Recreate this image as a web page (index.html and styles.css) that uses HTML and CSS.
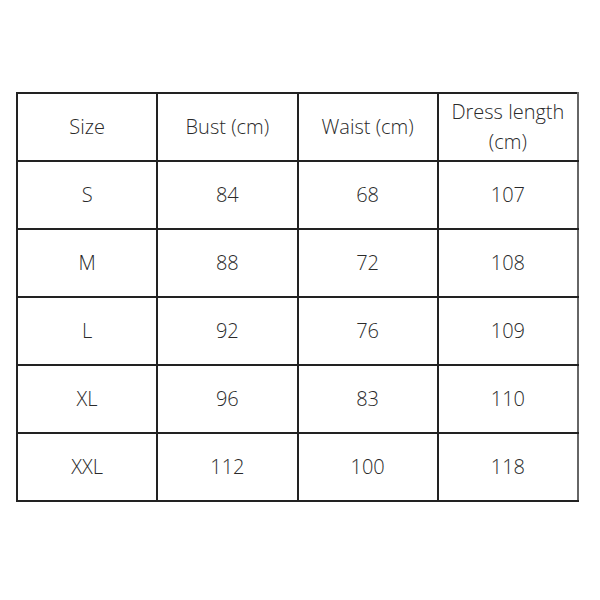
FILE: index.html
```html
<!DOCTYPE html>
<html>
<head>
<meta charset="utf-8">
<link rel="stylesheet" href="styles.css">
</head>
<body>
<div class="page">
<table class="size-table">
<tr><td>Size</td><td>Bust (cm)</td><td>Waist (cm)</td><td class="two">Dress length<br>(cm)</td></tr>
<tr><td>S</td><td>84</td><td>68</td><td>107</td></tr>
<tr><td>M</td><td>88</td><td>72</td><td>108</td></tr>
<tr><td>L</td><td>92</td><td>76</td><td>109</td></tr>
<tr><td>XL</td><td>96</td><td>83</td><td>110</td></tr>
<tr><td>XXL</td><td>112</td><td>100</td><td>118</td></tr>
</table>
</div>
</body>
</html>
```
FILE: styles.css
```css
html, body { margin: 0; padding: 0; background: #fff; }
.page { padding: 92px 0 0 16px; }
.size-table {
  border-collapse: collapse;
  table-layout: fixed;
  width: 563px;
  font-family: "Open Sans", "DejaVu Sans", sans-serif;
  font-weight: 300;
  font-size: 20px;
  color: #2a2a2a;
}
.size-table td {
  border: 2px solid #222;
  height: 66px;
  padding: 0;
  text-align: center;
  vertical-align: middle;
  width: 25%;
  line-height: 30px;
}
.size-table td:last-child { border-right-color: #666; }
```
